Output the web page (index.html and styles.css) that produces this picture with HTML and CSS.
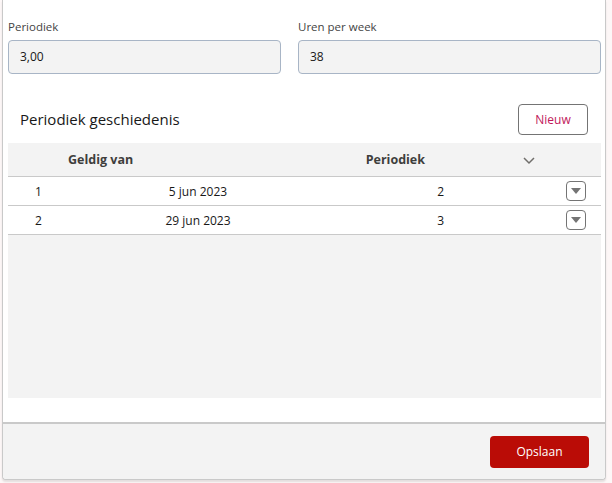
FILE: index.html
```html
<!DOCTYPE html>
<html lang="nl">
<head>
    <meta charset="UTF-8">
    <title>Periodiek</title>
    <link rel="stylesheet" href="styles.css">
</head>
<body>
    <div class="panel">
        <div class="panel-body">
            <div class="fields">
                <div class="field">
                    <label class="field-label">Periodiek</label>
                    <div class="field-input">3,00</div>
                </div>
                <div class="field">
                    <label class="field-label">Uren per week</label>
                    <div class="field-input">38</div>
                </div>
            </div>

            <div class="section-head">
                <span class="section-title">Periodiek geschiedenis</span>
                <button class="btn-outline">Nieuw</button>
            </div>

            <div class="grid">
                <div class="grid-row grid-header">
                    <span class="col-num"></span>
                    <span class="col-date">Geldig van</span>
                    <span class="col-value">Periodiek</span>
                    <span class="col-action">
                        <svg width="14" height="10" viewBox="0 0 14 10"><path d="M2 3 L7 8 L12 3" fill="none" stroke="#706e6b" stroke-width="1.5"/></svg>
                    </span>
                </div>
                <div class="grid-row">
                    <span class="col-num">1</span>
                    <span class="col-date">5 jun 2023</span>
                    <span class="col-value">2</span>
                    <span class="col-action"><span class="row-menu"><svg width="10" height="6" viewBox="0 0 10 6"><path d="M0 0 H10 L5 6 Z" fill="#747474"/></svg></span></span>
                </div>
                <div class="grid-row">
                    <span class="col-num">2</span>
                    <span class="col-date">29 jun 2023</span>
                    <span class="col-value">3</span>
                    <span class="col-action"><span class="row-menu"><svg width="10" height="6" viewBox="0 0 10 6"><path d="M0 0 H10 L5 6 Z" fill="#747474"/></svg></span></span>
                </div>
                <div class="grid-empty"></div>
            </div>
        </div>
        <div class="panel-footer">
            <button class="btn-brand">Opslaan</button>
        </div>
    </div>
</body>
</html>
```

FILE: styles.css
```css
* {
    margin: 0;
    padding: 0;
    box-sizing: border-box;
}

html, body {
    height: 100%;
}

body {
    background-color: #fdf7f7;
    font-family: "Open Sans", "Noto Sans", sans-serif;
    color: #3e3e3c;
    padding: 0 6px 3px 2px;
}

.panel {
    height: 100%;
    display: flex;
    flex-direction: column;
    background-color: #fff;
    border: 1px solid #c9c9c9;
    border-top: none;
    border-radius: 0 0 4px 4px;
    box-shadow: 0 2px 2px rgba(0, 0, 0, 0.1);
}

.panel-body {
    flex: 1;
    padding: 18px 4px 24px 5px;
    display: flex;
    flex-direction: column;
}

.fields {
    display: flex;
    gap: 17px;
}

.field {
    flex: 1;
    display: flex;
    flex-direction: column;
}

.field:first-child {
    flex: 0 0 273px;
}

.field-label {
    font-size: 11.5px;
    color: #444;
    line-height: 18px;
    margin-bottom: 4px;
}

.field-input {
    height: 34px;
    background-color: #f3f3f3;
    border: 1px solid #a8b5c6;
    border-radius: 4px;
    padding: 0 11px;
    font-size: 12px;
    line-height: 32px;
    color: #181818;
}

.section-head {
    display: flex;
    justify-content: space-between;
    align-items: center;
    margin-top: 30px;
    padding: 0 13px 0 12px;
    height: 30px;
}

.section-title {
    font-size: 15px;
    color: #181818;
}

.btn-outline {
    width: 70px;
    height: 31px;
    background: #fff;
    border: 1px solid #747474;
    border-radius: 4px;
    font-family: inherit;
    font-size: 12px;
    color: #c1175b;
}

.grid {
    flex: 1;
    margin-top: 9px;
    display: flex;
    flex-direction: column;
    background-color: #f3f3f3;
}

.grid-row {
    display: flex;
    align-items: center;
    height: 29px;
    background-color: #fff;
    border-bottom: 1px solid #c9c9c9;
    font-size: 12px;
    color: #181818;
}

.grid-header {
    height: 34px;
    background-color: #f3f3f3;
    font-weight: bold;
    font-size: 12.5px;
    color: #3e3e3c;
}

.col-num {
    width: 60px;
    padding-left: 27px;
}

.col-date {
    width: 260px;
    text-align: center;
}

.grid-header .col-date {
    text-align: left;
}

.col-value {
    width: 116px;
    text-align: right;
}

.grid-header .col-value {
    width: 97px;
}

.col-action {
    flex: 1;
    display: flex;
    justify-content: flex-end;
    padding-right: 15px;
}

.grid-header .col-action {
    justify-content: flex-start;
    padding-left: 97px;
}

.row-menu {
    width: 20px;
    height: 20px;
    border: 1px solid #747474;
    border-radius: 4px;
    display: flex;
    align-items: center;
    justify-content: center;
}

.grid-empty {
    flex: 1;
}

.panel-footer {
    flex: 0 0 57px;
    background-color: #f3f3f3;
    border-top: 2px solid #c9c9c9;
    border-radius: 0 0 4px 4px;
    display: flex;
    justify-content: flex-end;
    align-items: center;
    padding-right: 16px;
}

.btn-brand {
    width: 99px;
    height: 32px;
    background-color: #ba0c06;
    border: none;
    border-radius: 4px;
    color: #fff;
    font-family: inherit;
    font-size: 12px;
}
```
